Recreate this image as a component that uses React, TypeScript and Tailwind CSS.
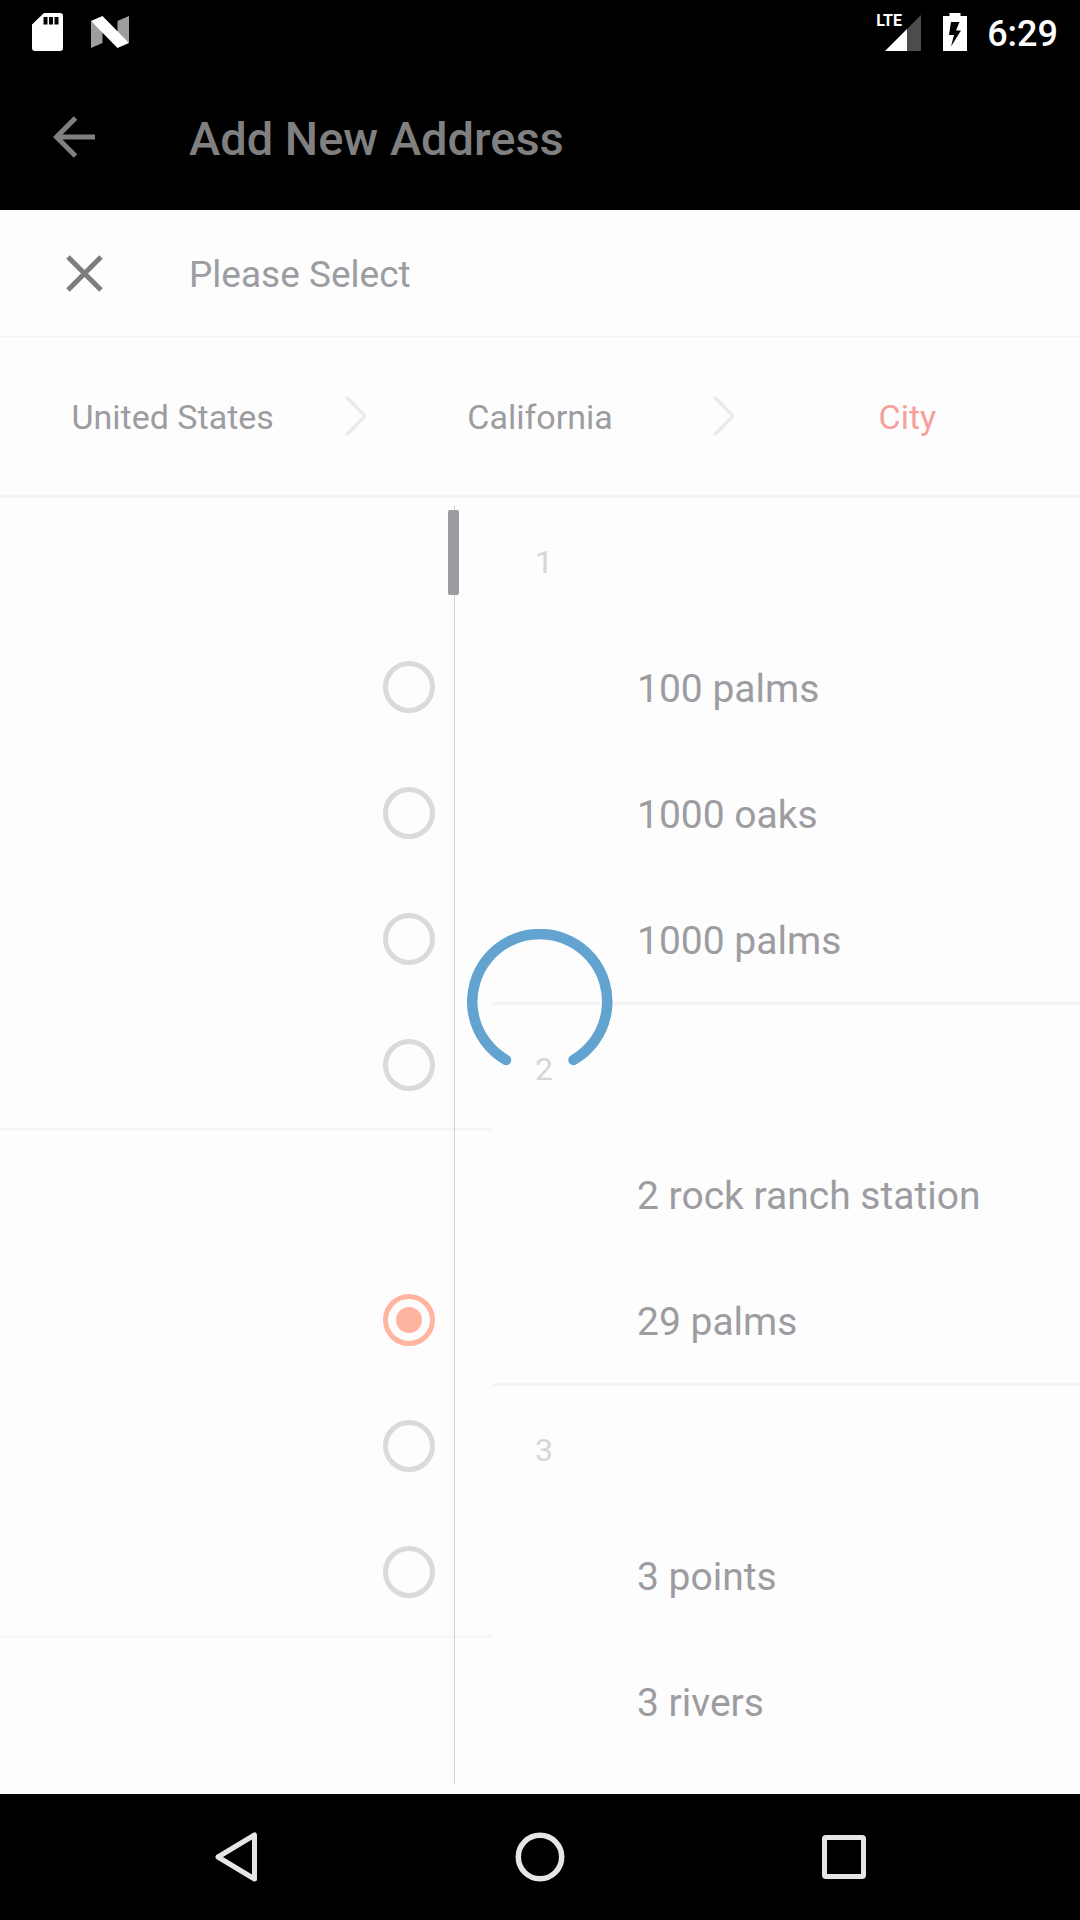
import React from "react";

const cityGroups = [
  { title: "1", cities: ["100 palms", "1000 oaks", "1000 palms"] },
  { title: "2", cities: ["2 rock ranch station", "29 palms"] },
  { title: "3", cities: ["3 points", "3 rivers"] },
];

const stateGroups = [
  [false, false, false, false],
  [true, false, false],
];

function StatusBar() {
  return (
    <div className="flex h-[63px] items-center justify-between bg-black pl-8 pr-[22px] text-white">
      <div className="flex items-center gap-7">
        <svg width="31" height="38" viewBox="0 0 31 38" aria-hidden="true">
          <path
            fill="#fff"
            fillRule="evenodd"
            d="M12 0H28a3 3 0 0 1 3 3V35a3 3 0 0 1-3 3H3a3 3 0 0 1-3-3V11.500zM11.500 4v7.500h4V4zM17 4v7.500h4V4zM22.500 4v7.500h4V4z"
          />
        </svg>
        <svg width="38" height="32" viewBox="0 0 38 32" aria-hidden="true">
          <path fill="#9e9e9e" d="M0 5L11.500 14V27L0 32zM38 0V27L26.500 18V5z" />
          <path fill="#fff" d="M0 5L11.500 0L38 27L26.500 32z" />
        </svg>
      </div>
      <div className="flex items-center">
        <div className="relative mr-[22px] h-[38px] w-[45px]">
          <span className="absolute left-0 top-0 text-[16px] font-bold leading-[16px]">LTE</span>
          <svg className="absolute bottom-0 right-0" width="36" height="36" viewBox="0 0 36 36" aria-hidden="true">
            <path fill="#4d4d4d" d="M36 0V36H22V14z" />
            <path fill="#fff" d="M22 14V36H0z" />
          </svg>
        </div>
        <svg className="mr-5" width="24" height="38" viewBox="0 0 24 38" aria-hidden="true">
          <path
            fill="#fff"
            fillRule="evenodd"
            d="M6.500 0H17.500V3H24V38H0V3H6.500zM8 9L6 22H11L8 33.500L18 17.500H13L16.500 9z"
          />
        </svg>
        <span className="pt-1 text-[36px] font-medium leading-[44px]">6:29</span>
      </div>
    </div>
  );
}

function AppBar() {
  return (
    <header className="flex h-[147px] items-center bg-black pl-[53px] text-[#808080]">
      <button type="button" aria-label="Back" className="mr-[94px]">
        <svg width="42" height="42" viewBox="0 0 42 42" fill="none" stroke="currentColor" strokeWidth="5" aria-hidden="true">
          <path d="M42 21H5M22.500 2L3.500 21L22.500 40" />
        </svg>
      </button>
      <h1 className="pt-1 text-[47px] font-medium leading-[56px]">Add New Address</h1>
    </header>
  );
}

function Chevron() {
  return (
    <svg className="shrink-0" width="22" height="40" viewBox="0 0 22 40" fill="none" stroke="#e8e8e8" strokeWidth="3" aria-hidden="true">
      <path d="M1.500 1L20 20L1.500 39" />
    </svg>
  );
}

function Steps() {
  return (
    <nav aria-label="Location" className="flex items-center border-b-3 border-[#f4f4f4] text-[34px] leading-[40px]">
      <button type="button" className="h-[158px] flex-1 pt-0.5">United States</button>
      <Chevron />
      <button type="button" className="h-[158px] flex-1 pt-0.5">California</button>
      <Chevron />
      <button type="button" className="h-[158px] flex-1 pt-0.5 text-[#f5a09c]">City</button>
    </nav>
  );
}

function StateList() {
  return (
    <div className="relative">
      {stateGroups.map((group, g) => (
        <div key={g} className="border-b-3 border-[#f6f6f6] pt-[126px]">
          {group.map((selected, i) => (
            <div key={i} className="flex h-[126px] items-center justify-end pr-[58px]">
              <input
                type="radio"
                name="state"
                aria-label={`State ${g + 1}.${i + 1}`}
                defaultChecked={selected}
                className="size-[52px] appearance-none rounded-full border-5 border-[#d9dadb] p-2 checked:border-[#ffb4a0] checked:bg-[#ffb4a0] checked:bg-clip-content"
              />
            </div>
          ))}
        </div>
      ))}
      <div className="absolute bottom-[10px] right-8 top-2 flex w-[13px] justify-center">
        <div className="w-px bg-[#cfd0d3]" />
        <div className="absolute left-0 top-1 h-[85px] w-[11px] rounded-xs bg-[#9b9ca0]" />
      </div>
    </div>
  );
}

function CityList() {
  return (
    <div>
      {cityGroups.map((group) => (
        <section key={group.title} className="border-b-3 border-[#f4f4f4] last:border-b-0">
          <h2 className="flex h-[126px] items-center pl-[42px] pt-0.5 text-[32px] leading-[38px] text-[#d6d6d8]">
            {group.title}
          </h2>
          <ul>
            {group.cities.map((city) => (
              <li key={city}>
                <button type="button" className="h-[126px] w-full pl-36 pt-1 text-left text-[39px] leading-[46px]">
                  {city}
                </button>
              </li>
            ))}
          </ul>
        </section>
      ))}
    </div>
  );
}

function Spinner() {
  return (
    <div role="status" aria-label="Loading" className="pointer-events-none absolute inset-0 flex items-center justify-center">
      <svg width="146" height="146" viewBox="-73 -73 146 146" fill="none" aria-hidden="true">
        <path d="M-34 58A67.500 67.500 0 1 1 33.500 58" stroke="#62a4cf" strokeWidth="10.500" strokeLinecap="round" />
      </svg>
    </div>
  );
}

function NavigationBar() {
  return (
    <div className="flex h-[126px] items-center bg-black px-[84px]">
      <button type="button" aria-label="Back" className="flex flex-1 justify-center">
        <svg width="42" height="50" viewBox="0 0 42 50" fill="none" stroke="#e6e6e6" strokeWidth="5" strokeLinejoin="round" aria-hidden="true">
          <path d="M39.500 3V47L3 25z" />
        </svg>
      </button>
      <button type="button" aria-label="Home" className="flex flex-1 justify-center">
        <svg width="50" height="50" viewBox="0 0 50 50" fill="none" stroke="#e6e6e6" strokeWidth="5.500" aria-hidden="true">
          <circle cx="25" cy="25" r="21.700" />
        </svg>
      </button>
      <button type="button" aria-label="Recent apps" className="flex flex-1 justify-center">
        <svg width="44" height="44" viewBox="0 0 44 44" fill="none" stroke="#e6e6e6" strokeWidth="5" aria-hidden="true">
          <rect x="2.500" y="2.500" width="39" height="39" rx="1.500" />
        </svg>
      </button>
    </div>
  );
}

export default function App() {
  return (
    <div className="flex min-h-screen flex-col bg-[#fdfdfd] font-['Roboto',sans-serif] text-[#9c9ca1]">
      <StatusBar />
      <AppBar />
      <main className="relative flex flex-1 flex-col">
        <div className="flex h-[127px] items-center border-b border-[#f5f5f5] pl-[66px]">
          <button type="button" aria-label="Close" className="mr-[86px]">
            <svg width="37" height="37" viewBox="0 0 37 37" fill="none" stroke="#7d7d7d" strokeWidth="5" aria-hidden="true">
              <path d="M2 2L35 35M35 2L2 35" />
            </svg>
          </button>
          <h2 className="pt-1 text-[37px] leading-[44px]">Please Select</h2>
        </div>
        <Steps />
        <div className="grid flex-1 grid-cols-[493fr_587fr]">
          <StateList />
          <CityList />
        </div>
        <Spinner />
      </main>
      <NavigationBar />
    </div>
  );
}
